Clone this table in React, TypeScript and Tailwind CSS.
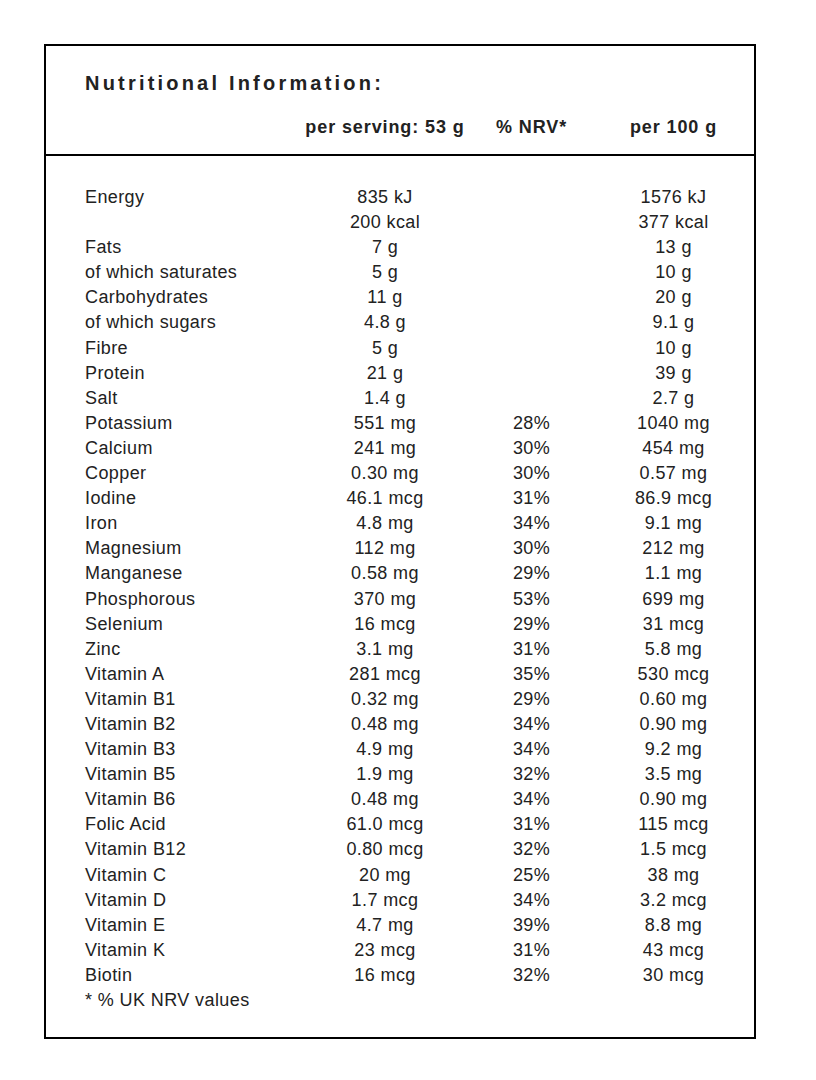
const rows: [string, string, string, string][] = [
  ["Energy", "835 kJ", "", "1576 kJ"],
  ["", "200 kcal", "", "377 kcal"],
  ["Fats", "7 g", "", "13 g"],
  ["of which saturates", "5 g", "", "10 g"],
  ["Carbohydrates", "11 g", "", "20 g"],
  ["of which sugars", "4.8 g", "", "9.1 g"],
  ["Fibre", "5 g", "", "10 g"],
  ["Protein", "21 g", "", "39 g"],
  ["Salt", "1.4 g", "", "2.7 g"],
  ["Potassium", "551 mg", "28%", "1040 mg"],
  ["Calcium", "241 mg", "30%", "454 mg"],
  ["Copper", "0.30 mg", "30%", "0.57 mg"],
  ["Iodine", "46.1 mcg", "31%", "86.9 mcg"],
  ["Iron", "4.8 mg", "34%", "9.1 mg"],
  ["Magnesium", "112 mg", "30%", "212 mg"],
  ["Manganese", "0.58 mg", "29%", "1.1 mg"],
  ["Phosphorous", "370 mg", "53%", "699 mg"],
  ["Selenium", "16 mcg", "29%", "31 mcg"],
  ["Zinc", "3.1 mg", "31%", "5.8 mg"],
  ["Vitamin A", "281 mcg", "35%", "530 mcg"],
  ["Vitamin B1", "0.32 mg", "29%", "0.60 mg"],
  ["Vitamin B2", "0.48 mg", "34%", "0.90 mg"],
  ["Vitamin B3", "4.9 mg", "34%", "9.2 mg"],
  ["Vitamin B5", "1.9 mg", "32%", "3.5 mg"],
  ["Vitamin B6", "0.48 mg", "34%", "0.90 mg"],
  ["Folic Acid", "61.0 mcg", "31%", "115 mcg"],
  ["Vitamin B12", "0.80 mcg", "32%", "1.5 mcg"],
  ["Vitamin C", "20 mg", "25%", "38 mg"],
  ["Vitamin D", "1.7 mcg", "34%", "3.2 mcg"],
  ["Vitamin E", "4.7 mg", "39%", "8.8 mg"],
  ["Vitamin K", "23 mcg", "31%", "43 mcg"],
  ["Biotin", "16 mcg", "32%", "30 mcg"],
];

const cols = "grid grid-cols-[230px_140px_153px_131px] whitespace-nowrap";
const cell = "flex justify-center";

export default function App() {
  return (
    <div className="min-h-screen bg-white pl-[44px] pt-[44px] font-['Liberation_Sans',Arial,sans-serif] text-[#222]">
      <div className="flex h-[995px] w-[712px] flex-col border-2 border-black">
        <div className="border-b-2 border-black pb-[15px] pl-[39px] pt-[25px]">
          <h1 className="text-[20px] font-bold leading-[24px] tracking-[3.2px]">
            Nutritional Information:
          </h1>
          <div className={`${cols} mt-[20px] text-[18px] font-bold leading-[24px] tracking-[0.9px]`}>
            <span />
            <span className={cell}>per serving: 53 g</span>
            <span className={cell}>% NRV*</span>
            <span className={cell}>per 100 g</span>
          </div>
        </div>

        <div className="pl-[39px] pt-[29px] text-[18px] leading-[25.1px] tracking-[0.4px]">
          {rows.map(([name, serving, nrv, per100], i) => (
            <div key={i} className={cols}>
              <span>{name}</span>
              <span className={cell}>{serving}</span>
              <span className={cell}>{nrv}</span>
              <span className={cell}>{per100}</span>
            </div>
          ))}
          <p>* % UK NRV values</p>
        </div>
      </div>
    </div>
  );
}
